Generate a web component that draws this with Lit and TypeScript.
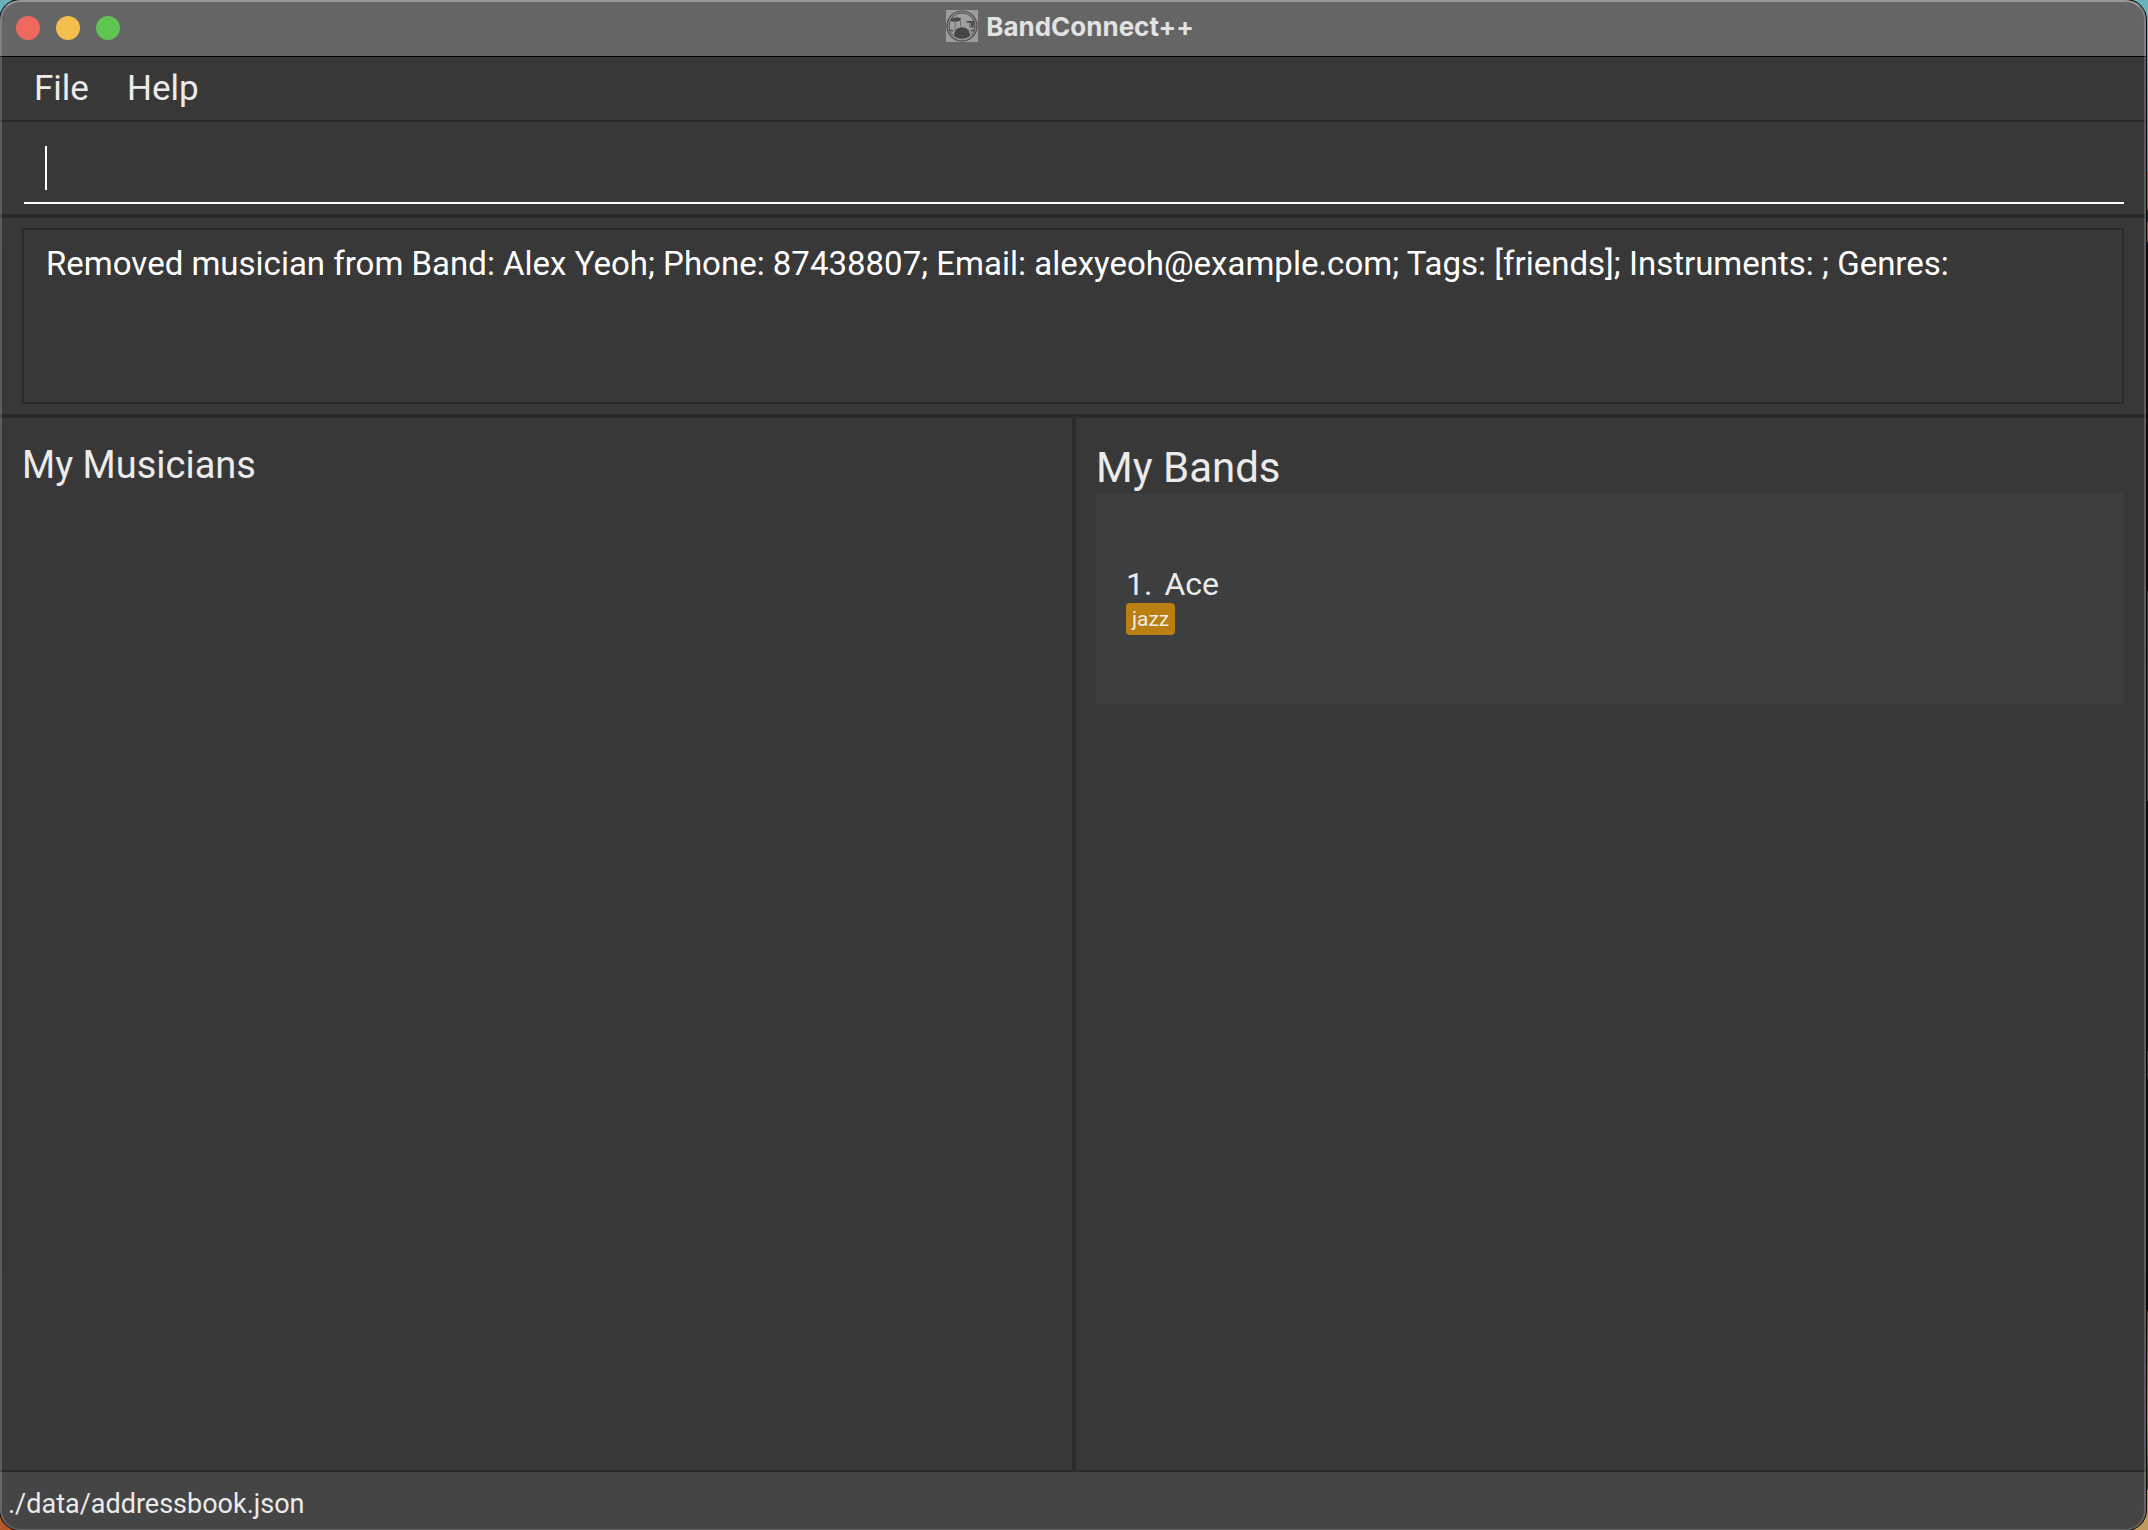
import { LitElement, html, css, svg } from "lit";
import { customElement, state } from "lit/decorators.js";

interface Band {
  name: string;
  genres: string[];
}

const drumIcon = svg`
  <rect width="32" height="32" fill="#9d9d9d" />
  <circle cx="16" cy="16" r="15" fill="#8f8f8f" stroke="#484848" stroke-width="1.2" />
  <circle cx="16" cy="16" r="13" fill="#a0a0a0" stroke="#505050" stroke-width="1" />
  <ellipse cx="9.8" cy="9.6" rx="5.4" ry="2.2" fill="#484848" transform="rotate(-6 9.8 9.6)" />
  <path d="M9.2 10v10M14.5 9v7" stroke="#6a6a6a" stroke-width="1" fill="none" />
  <path d="M20.5 11h8v1.600h-.8V17.500h-4.200v-4.900h-3z" fill="#484848" />
  <path d="M24.600 12.800v4" stroke="#8a8a8a" stroke-width="1" fill="none" />
  <path d="M4 20l3.500 1M28 20l-3.500 1" stroke="#5a5a5a" stroke-width="1.500" fill="none" />
  <path d="M7.500 26C7.500 20.500 11 16.800 16 16.800S24.500 20.500 24.500 26C22.500 28 19.500 29.200 16 29.200S9.500 28 7.500 26z"
    fill="#464646" stroke="#a0a0a0" stroke-width="1" />
`;

@customElement("app-title-bar")
export class AppTitleBar extends LitElement {
  static styles = css`
    :host {
      display: grid;
      grid-template-columns: 1fr auto 1fr;
      align-items: center;
      height: 56px;
      padding: 0 22px 0 16px;
      background: #656565;
      border-bottom: 1px solid #000;
    }
    .lights {
      display: flex;
      gap: 16px;
    }
    .light {
      width: 24px;
      height: 24px;
      padding: 0;
      border: 0;
      border-radius: 50%;
    }
    .close { background: #ee6a5f; }
    .minimise { background: #f5bf4f; }
    .zoom { background: #61c554; }
    .title {
      display: flex;
      align-items: center;
      gap: 8px;
      margin: 0;
      padding-bottom: 4px;
      color: #e2e2e2;
      font: bold 26px/34px Inter, "Liberation Sans", sans-serif;
    }
    .name {
      padding-top: 2px;
    }
    .icon {
      display: block;
      width: 32px;
      height: 32px;
    }
  `;

  render() {
    return html`
      <div class="lights">
        <button class="light close" aria-label="Close"></button>
        <button class="light minimise" aria-label="Minimise"></button>
        <button class="light zoom" aria-label="Zoom"></button>
      </div>
      <h1 class="title">
        <svg class="icon" viewBox="0 0 32 32" aria-hidden="true">${drumIcon}</svg>
        <span class="name">BandConnect++</span>
      </h1>
    `;
  }
}

@customElement("band-card")
export class BandCard extends LitElement {
  static properties = { index: { type: Number }, band: { attribute: false } };
  declare index: number;
  declare band: Band;

  static styles = css`
    :host {
      display: block;
      padding: 71px 30px 69px;
      background: #3c3e3f;
    }
    .heading {
      display: flex;
      gap: 12px;
      margin: 0;
      font-size: 32px;
      font-weight: 400;
      line-height: 38px;
    }
    .tags {
      display: flex;
      gap: 8px;
    }
    .tag {
      padding: 0 6px;
      border-radius: 4px;
      background: #ba7f11;
      font-size: 21px;
      line-height: 32px;
    }
  `;

  render() {
    return html`
      <h3 class="heading"><span>${this.index}.</span><span>${this.band.name}</span></h3>
      <div class="tags">${this.band.genres.map((g) => html`<span class="tag">${g}</span>`)}</div>
    `;
  }
}

@customElement("app-root")
export class AppRoot extends LitElement {
  static styles = css`
    :host {
      display: block;
      height: 100vh;
      box-sizing: border-box;
      padding-right: 2px;
      background:
        linear-gradient(#68b2b9, #68b2b9) top / 100% 60px no-repeat,
        linear-gradient(90deg, #b4572b 50%, #c09a5c 50%) bottom / 100% 40px no-repeat,
        linear-gradient(#68b2b9 60px, #4c8a90 171px, #94583a 172px, #94583a 210px, #221c20 211px, #221c20 221px,
          #94583a 222px, #7a4c36 242px, #0c0808 243px, #0c0808 590px, #383838 592px, #404040 800px,
          #0c0c0c 802px, #0c0c0c 1050px, #333 1052px, #2a2a2a 1078px, #080808 1080px, #080808 1310px,
          #6b4a2a 1312px, #a08a50 1420px, #14371a 1502px, #14371a 1518px, #c09a5c 1519px);
      color: #ebebeb;
      font-family: Roboto, "Liberation Sans", sans-serif;
    }
    .window {
      position: relative;
      display: flex;
      flex-direction: column;
      height: 100%;
      overflow: hidden;
      border-radius: 20px;
      background: #383838;
      box-shadow: 0 0 0 1px #0a0a0a;
    }
    /* Translucent rim drawn over the edge of the window. */
    .window::after {
      content: "";
      position: absolute;
      inset: 0;
      border: 2px solid rgba(255, 255, 255, 0.18);
      border-top-color: rgba(255, 255, 255, 0.34);
      border-bottom-width: 1px;
      border-radius: 20px;
      pointer-events: none;
    }
    .menu {
      display: flex;
      gap: 38px;
      padding: 10px 34px 9px;
      border-bottom: 2px solid #2b2b2b;
    }
    .menu-item {
      padding: 0;
      border: 0;
      background: none;
      color: inherit;
      font: inherit;
      font-size: 35px;
      line-height: 44px;
    }
    .command {
      padding: 16px 22px 10px 24px;
      border-bottom: 4px solid #2b2b2b;
    }
    .field {
      display: flex;
      align-items: center;
      padding: 8px 20px 12px 21px;
      border-bottom: 2px solid #fff;
    }
    .caret {
      width: 2px;
      height: 44px;
      background: #fff;
    }
    .input {
      flex: 1;
      min-width: 0;
      padding: 0;
      border: 0;
      outline: 0;
      background: none;
      color: #fff;
      caret-color: transparent;
      font: inherit;
      font-size: 33px;
      line-height: 44px;
    }
    .feedback {
      padding: 10px 22px;
      border-bottom: 4px solid #2b2b2b;
    }
    .message {
      display: block;
      min-height: 148px;
      padding: 12px 22px;
      border: 2px solid #2b2b2b;
      color: #fff;
      font-size: 33px;
      line-height: 44px;
    }
    .panels {
      display: flex;
      flex: 1;
      min-height: 0;
    }
    .panel {
      flex: 1;
      padding: 24px 22px 0;
    }
    .panel + .panel {
      padding-left: 20px;
      border-left: 4px solid #2b2b2b;
    }
    .panel-title {
      margin: 0;
      font-weight: 400;
    }
    .musicians {
      font-size: 38px;
      line-height: 46px;
    }
    .bands {
      font-size: 42px;
      line-height: 52px;
    }
    .list {
      margin: 0;
      padding: 0;
      list-style: none;
    }
    .status {
      padding: 16px 8px 10px;
      border-top: 2px solid #2b2b2b;
      background: #454545;
      font-size: 27px;
      line-height: 32px;
    }
  `;

  @state() private bands: Band[] = [{ name: "Ace", genres: ["jazz"] }];
  @state() private message =
    "Removed musician from Band: Alex Yeoh; Phone: 87438807; Email: alexyeoh@example.com; Tags: [friends]; Instruments: ; Genres:";

  render() {
    return html`
      <div class="window">
        <app-title-bar></app-title-bar>
        <nav class="menu">
          <button class="menu-item">File</button>
          <button class="menu-item">Help</button>
        </nav>
        <div class="command">
          <div class="field">
            <span class="caret"></span>
            <input class="input" type="text" aria-label="Command" />
          </div>
        </div>
        <div class="feedback"><output class="message">${this.message}</output></div>
        <main class="panels">
          <section class="panel">
            <h2 class="panel-title musicians">My Musicians</h2>
          </section>
          <section class="panel">
            <h2 class="panel-title bands">My Bands</h2>
            <ul class="list">
              ${this.bands.map((b, i) => html`<li><band-card .index=${i + 1} .band=${b}></band-card></li>`)}
            </ul>
          </section>
        </main>
        <footer class="status">./data/addressbook.json</footer>
      </div>
    `;
  }
}
